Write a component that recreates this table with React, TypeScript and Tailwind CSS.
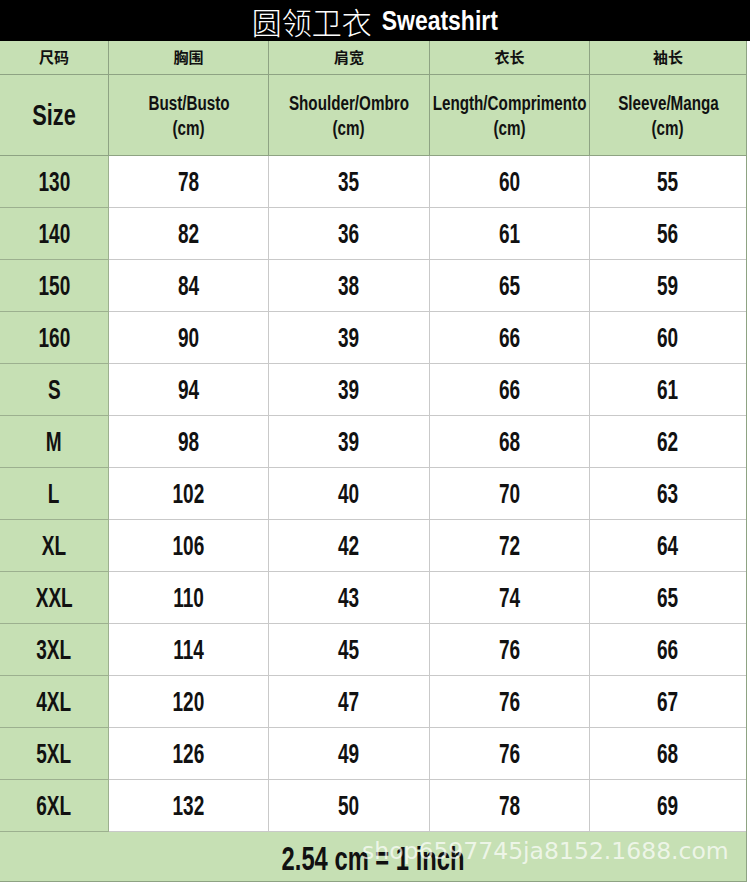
const rows: [string, number, number, number, number][] = [
  ["130", 78, 35, 60, 55],
  ["140", 82, 36, 61, 56],
  ["150", 84, 38, 65, 59],
  ["160", 90, 39, 66, 60],
  ["S", 94, 39, 66, 61],
  ["M", 98, 39, 68, 62],
  ["L", 102, 40, 70, 63],
  ["XL", 106, 42, 72, 64],
  ["XXL", 110, 43, 74, 65],
  ["3XL", 114, 45, 76, 66],
  ["4XL", 120, 47, 76, 67],
  ["5XL", 126, 49, 76, 68],
  ["6XL", 132, 50, 78, 69],
];

const sans = { fontFamily: '"Liberation Sans", Arial, sans-serif' };
const cjk = { fontFamily: '"Noto Sans CJK SC", sans-serif' };

const heads = [
  { zh: "胸围", en: "Bust/Busto" },
  { zh: "肩宽", en: "Shoulder/Ombro" },
  { zh: "衣长", en: "Length/Comprimento" },
  { zh: "袖长", en: "Sleeve/Manga" },
];

// the reference uses a condensed DIN-like face; squeeze Liberation Sans Bold
const num = "inline-block whitespace-nowrap scale-x-[0.68] font-bold text-[28px] leading-none";

export default function App() {
  return (
    <div className="w-[750px] h-[883px] bg-white text-[#111] overflow-hidden relative" style={sans}>
      {/* title bar */}
      <div className="h-[41px] bg-black flex items-center justify-center text-white">
        <span className="text-[30px] leading-none" style={{ ...cjk, fontWeight: 300 }}>
          圆领卫衣
        </span>
        <span className="inline-block whitespace-nowrap scale-x-[0.82] text-[28px] font-bold leading-none -ml-[3px] -mr-[12px]">
          Sweatshirt
        </span>
      </div>

      <div className="w-[747px] grid grid-cols-[109px_160px_161px_160px_1fr] border-r border-[#8ea383]">
        {/* header row: chinese */}
        <div
          className="h-[34px] bg-[#c6e0b4] border-r border-b border-[#8ea383] flex items-center justify-center font-bold text-[15px]"
          style={cjk}
        >
          尺码
        </div>
        {heads.map((h, i) => (
          <div
            key={h.zh}
            className={`h-[34px] bg-[#c6e0b4] border-b border-[#8ea383] flex items-center justify-center font-bold text-[15px] ${i < 3 ? "border-r" : ""}`}
            style={cjk}
          >
            {h.zh}
          </div>
        ))}

        {/* header row: english */}
        <div className="h-[81px] bg-[#c6e0b4] border-r border-b border-[#8ea383] flex items-center justify-center">
          <span className="inline-block whitespace-nowrap scale-x-[0.75] font-bold text-[29px] leading-none">Size</span>
        </div>
        {heads.map((h, i) => (
          <div
            key={h.en}
            className={`h-[81px] bg-[#c6e0b4] border-b border-[#8ea383] flex flex-col items-center justify-center gap-[6px] pt-[2px] ${i < 3 ? "border-r" : ""}`}
          >
            <span className="inline-block whitespace-nowrap scale-x-[0.78] font-bold text-[19.5px] leading-none">{h.en}</span>
            <span className="inline-block whitespace-nowrap scale-x-[0.78] font-bold text-[19.5px] leading-none">(cm)</span>
          </div>
        ))}

        {/* data rows */}
        {rows.map((r) => (
          <div key={r[0]} className="contents">
            <div className="h-[52px] bg-[#c6e0b4] border-r border-b border-[#9cb08f] flex items-center justify-center">
              <span className={num}>{r[0]}</span>
            </div>
            {r.slice(1).map((v, i) => (
              <div
                key={i}
                className={`h-[52px] bg-white border-b border-[#c9c9c9] flex items-center justify-center ${i < 3 ? "border-r" : ""}`}
              >
                <span className={num}>{v}</span>
              </div>
            ))}
          </div>
        ))}
      </div>

      {/* footer */}
      <div className="w-[747px] h-[50px] bg-[#c6e0b4] border-r border-b border-[#8ea383] flex items-center justify-center pt-[4px]">
        <span className="inline-block whitespace-nowrap scale-x-[0.72] font-bold text-[33px] leading-none">
          2.54 cm = 1 inch
        </span>
      </div>

      {/* watermark */}
      <div
        className="absolute left-[362px] top-[840px] text-[23.5px] leading-none text-white/70 whitespace-nowrap pointer-events-none"
        style={{ fontFamily: '"DejaVu Sans", sans-serif' }}
      >
        shop6597745ja8152.1688.com
      </div>
    </div>
  );
}
